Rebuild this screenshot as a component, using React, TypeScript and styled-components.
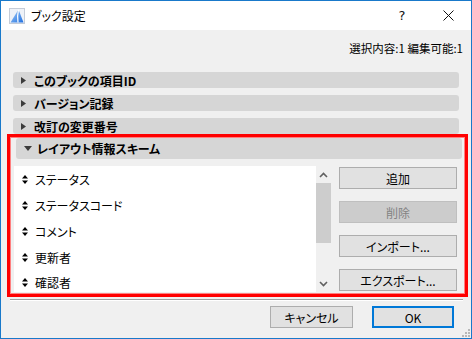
import React from "react";
import styled, { createGlobalStyle } from "styled-components";

const GlobalStyle = createGlobalStyle`
  html, body {
    margin: 0;
    padding: 0;
    background: #ffffff;
  }
  * {
    box-sizing: border-box;
  }
`;

const Window = styled.div`
  width: 472px;
  height: 339px;
  border: 1px solid #1979ca;
  background: #f0f0f0;
  display: flex;
  flex-direction: column;
  font-family: "Noto Sans CJK JP", "Noto Sans", sans-serif;
  font-feature-settings: "palt" 1;
  font-size: 12px;
  color: #000;
  position: relative;
`;

const TitleBar = styled.div`
  height: 29px;
  background: #ffffff;
  display: flex;
  align-items: center;
  padding-left: 8px;
`;

const TitleText = styled.span`
  margin-left: 6px;
  font-size: 12px;
  flex: 1;
`;

const CaptionButton = styled.div`
  width: 46px;
  height: 29px;
  display: flex;
  align-items: center;
  justify-content: center;
  font-family: "DejaVu Sans", sans-serif;
  font-size: 13px;
  color: #111;
`;

const Body = styled.div`
  flex: 1;
  display: flex;
  flex-direction: column;
  padding: 10px 0 0 6px;
`;

const Status = styled.div`
  height: 16px;
  line-height: 16px;
  text-align: right;
  padding-right: 8px;
  font-size: 11.5px;
  margin-bottom: 16px;
`;

const SectionHeader = styled.div<{ $tall?: boolean; $mb?: number }>`
  width: 446px;
  height: ${({ $tall }) => ($tall ? 21 : 16)}px;
  margin-left: ${({ $tall }) => ($tall ? 3 : 6)}px;
  margin-bottom: ${({ $mb }) => $mb ?? 7}px;
  margin-top: ${({ $tall }) => ($tall ? 1 : 0)}px;
  background: #d6d6d6;
  border-radius: 3px;
  display: flex;
  align-items: center;
  padding-left: 8px;
  font-weight: bold;
  font-size: 12px;
`;

const Caret = styled.span`
  width: 12px;
  display: inline-flex;
  align-items: center;
  margin-right: 1px;
`;

const HighlightBox = styled.div`
  width: 461px;
  height: 163px;
  border: 3px solid #ff0000;
  box-shadow: inset 0 0 0 1px #ff8080;
  display: flex;
  flex-direction: column;
  padding: 0 5px 0 3px;
`;

const SchemeRow = styled.div`
  display: flex;
  margin-top: 7px;
  margin-left: 1px;
`;

const ListPane = styled.div`
  width: 302px;
  height: 126px;
  background: #ffffff;
  overflow: hidden;
  padding-top: 1px;
`;

const ListItem = styled.div`
  height: 25.75px;
  display: flex;
  align-items: center;
  padding-left: 8px;
  font-size: 12px;
`;

const ItemText = styled.span`
  margin-left: 7px;
`;

const ScrollBar = styled.div`
  width: 15px;
  height: 126px;
  display: flex;
  flex-direction: column;
  align-items: center;
  background: #f0f0f0;
`;

const ScrollArrow = styled.div`
  height: 17px;
  display: flex;
  align-items: center;
  justify-content: center;
`;

const ScrollThumb = styled.div`
  width: 15px;
  height: 60px;
  background: #cdcdcd;
`;

const ScrollSpacer = styled.div`
  flex: 1;
`;

const ButtonColumn = styled.div`
  display: flex;
  flex-direction: column;
  gap: 12px;
  margin-left: 8px;
  padding-top: 1px;
`;

const Button = styled.div<{ $disabled?: boolean; $width?: number; $primary?: boolean }>`
  width: ${({ $width }) => $width ?? 118}px;
  height: 22px;
  display: flex;
  align-items: center;
  justify-content: center;
  font-size: 12px;
  background: ${({ $disabled }) => ($disabled ? "#cccccc" : "#e1e1e1")};
  color: ${({ $disabled }) => ($disabled ? "#838383" : "#000")};
  border: ${({ $disabled, $primary }) =>
    $primary ? "2px solid #0078d7" : $disabled ? "1px solid #bfbfbf" : "1px solid #adadad"};
`;

const Separator = styled.div`
  height: 1px;
  background: #a0a0a0;
  margin: 2px 8px 0 3px;
  box-shadow: 0 1px 0 #ffffff;
`;

const Footer = styled.div`
  display: flex;
  justify-content: flex-end;
  gap: 19px;
  padding: 6px 17px 0 0;
`;

const Grip = styled.svg`
  position: absolute;
  right: 1px;
  bottom: 1px;
`;

const AppIcon = () => (
  <svg width="16" height="16" viewBox="0 0 16 16">
    <defs>
      <linearGradient id="ag" x1="0" y1="0" x2="1" y2="1">
        <stop offset="0" stopColor="#a8d0f8" />
        <stop offset="1" stopColor="#1f6fe0" />
      </linearGradient>
    </defs>
    <rect x="0.5" y="0.5" width="15" height="15" fill="#eef2f8" stroke="#c4ccd8" />
    <path d="M1.5 14.5 L9.5 1.5 L14.5 14.5 Z" fill="url(#ag)" />
    <path d="M9.5 1.5 Q8 8 9 14.5" stroke="#ffffff" strokeWidth="1.2" fill="none" />
  </svg>
);

const RightCaret = () => (
  <svg width="5" height="7" viewBox="0 0 5 7">
    <path d="M0 0 L5 3.5 L0 7 Z" fill="#3c3c3c" />
  </svg>
);

const DownCaret = () => (
  <svg width="8" height="5" viewBox="0 0 8 5">
    <path d="M0 0 L8 0 L4 5 Z" fill="#3c3c3c" />
  </svg>
);

const SortIcon = () => (
  <svg width="6" height="9" viewBox="0 0 6 9">
    <path d="M3 0 L6 3.5 L0 3.5 Z" fill="#000" />
    <path d="M0 5.5 L6 5.5 L3 9 Z" fill="#000" />
  </svg>
);

const Chevron = ({ up }: { up?: boolean }) => (
  <svg width="9" height="6" viewBox="0 0 9 6">
    <path
      d={up ? "M1 5 L4.5 1.5 L8 5" : "M1 1 L4.5 4.5 L8 1"}
      stroke="#606060"
      strokeWidth="1.6"
      fill="none"
    />
  </svg>
);

const items = ["ステータス", "ステータスコード", "コメント", "更新者", "確認者"];

const App: React.FC = () => {
  return (
    <>
      <GlobalStyle />
      <Window>
        <TitleBar>
          <AppIcon />
          <TitleText>ブック設定</TitleText>
          <CaptionButton>?</CaptionButton>
          <CaptionButton>
            <svg width="11" height="11" viewBox="0 0 11 11">
              <path d="M0.5 0.5 L10.5 10.5 M10.5 0.5 L0.5 10.5" stroke="#111" strokeWidth="1" />
            </svg>
          </CaptionButton>
        </TitleBar>
        <Body>
          <Status>選択内容:1 編集可能:1</Status>
          <SectionHeader>
            <Caret><RightCaret /></Caret>このブックの項目ID
          </SectionHeader>
          <SectionHeader>
            <Caret><RightCaret /></Caret>バージョン記録
          </SectionHeader>
          <SectionHeader $mb={0}>
            <Caret><RightCaret /></Caret>改訂の変更番号
          </SectionHeader>
          <HighlightBox>
            <SectionHeader $tall $mb={0}>
              <Caret><DownCaret /></Caret>レイアウト情報スキーム
            </SectionHeader>
            <SchemeRow>
              <ListPane>
                {items.map((item) => (
                  <ListItem key={item}>
                    <SortIcon />
                    <ItemText>{item}</ItemText>
                  </ListItem>
                ))}
              </ListPane>
              <ScrollBar>
                <ScrollArrow><Chevron up /></ScrollArrow>
                <ScrollThumb />
                <ScrollSpacer />
                <ScrollArrow><Chevron /></ScrollArrow>
              </ScrollBar>
              <ButtonColumn>
                <Button>追加</Button>
                <Button $disabled>削除</Button>
                <Button>インポート...</Button>
                <Button>エクスポート...</Button>
              </ButtonColumn>
            </SchemeRow>
          </HighlightBox>
          <Separator />
          <Footer>
            <Button $width={83}>キャンセル</Button>
            <Button $width={82} $primary>OK</Button>
          </Footer>
        </Body>
        <Grip width="9" height="9" viewBox="0 0 9 9">
          <rect x="7" y="1" width="2" height="2" fill="#b8b8b8" />
          <rect x="4" y="4" width="2" height="2" fill="#b8b8b8" />
          <rect x="7" y="4" width="2" height="2" fill="#b8b8b8" />
          <rect x="1" y="7" width="2" height="2" fill="#b8b8b8" />
          <rect x="4" y="7" width="2" height="2" fill="#b8b8b8" />
          <rect x="7" y="7" width="2" height="2" fill="#b8b8b8" />
        </Grip>
      </Window>
    </>
  );
};

export default App;
